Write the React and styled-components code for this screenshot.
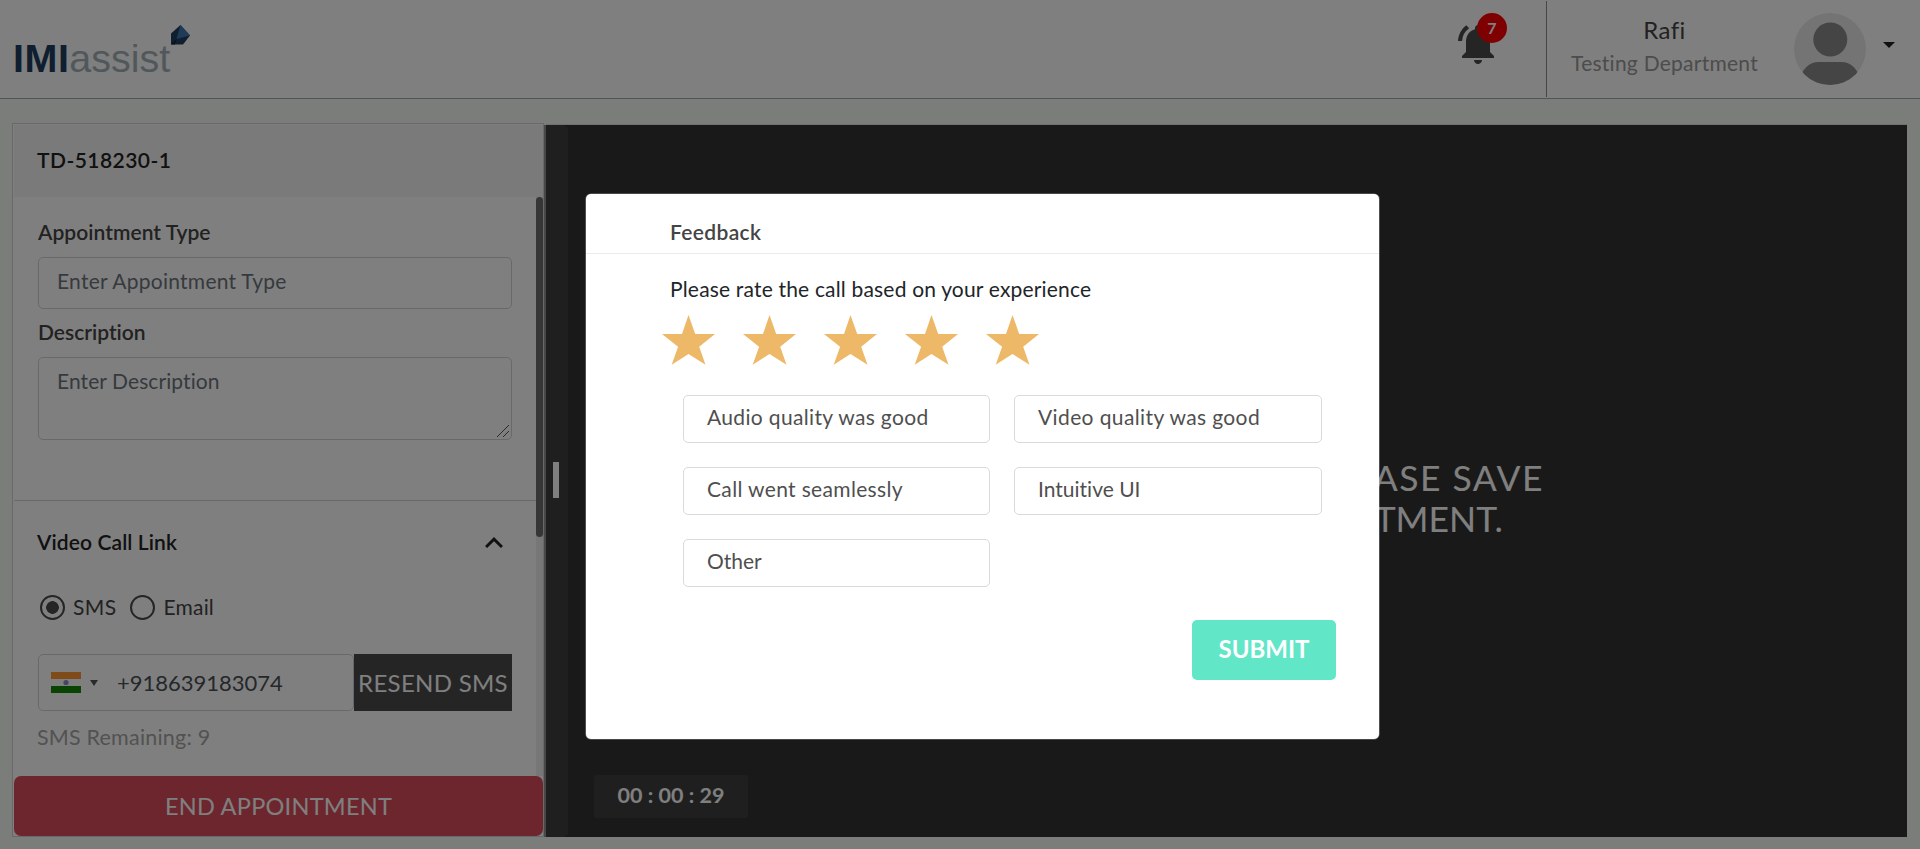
import React from 'react';
import styled, { createGlobalStyle } from 'styled-components';
import { MdNotificationsActive, MdKeyboardArrowUp } from 'react-icons/md';

const GlobalStyle = createGlobalStyle`
  *, *::before, *::after { box-sizing: border-box; }
  body { margin: 0; background: #f6faf7; overflow: hidden; }
  body, input, textarea, button { font-family: Lato, "Open Sans", sans-serif; }
`;

const Page = styled.div`
  position: relative;
  height: 849px;
  display: flex;
  flex-direction: column;
  background: #f6faf7;
  font-size: 21px;
  line-height: 24px;
  color: #444;
  overflow: hidden;
`;

const Text = styled.span`
  display: block;
  white-space: nowrap;
  font-size: ${(p) => p.$size || 21}px;
  font-weight: ${(p) => p.$weight || 400};
  letter-spacing: ${(p) => p.$spacing || 0}px;
  font-variant-ligatures: none;
  color: ${(p) => p.$color || 'inherit'};
`;

/* Top bar */
const TopBar = styled.header`
  flex: none;
  height: 99px;
  display: flex;
  align-items: flex-start;
  border-bottom: 1px solid #9ea8b6;
  background: #fff;
`;
const Logo = styled.div`
  display: flex;
  align-items: flex-start;
  margin-left: 13px;
  padding-top: 25px;
  font: 39.5px/44px "Liberation Sans", Arial, sans-serif;
`;
const LogoBold = styled.b`
  margin-top: 11px;
  color: #203f60;
  letter-spacing: 0.5px;
`;
const LogoLight = styled.span`
  margin-top: 11px;
  color: #a3b1b8;
`;
const LogoMark = styled.svg`
  display: block;
  width: 19px;
  height: 20px;
  margin-left: 1px;
`;
const Alerts = styled.div`
  position: relative;
  width: 48px;
  height: 48px;
  margin: 20px 44px 0 auto;
  color: #4a4a4a;
  svg { display: block; }
`;
const Badge = styled.span`
  position: absolute;
  left: 23px;
  top: -7px;
  width: 30px;
  height: 30px;
  border-radius: 50%;
  background: #f00;
  color: #fff;
  font-size: 16px;
  font-weight: 700;
  line-height: 29px;
  text-align: center;
`;
const Divider = styled.div`
  width: 1px;
  height: 96px;
  margin-top: 1px;
  background: #8c8c8c;
`;
const UserInfo = styled.div`
  width: 187px;
  margin: 13px 36px 0 24px;
  display: flex;
  flex-direction: column;
  align-items: center;
  line-height: 33px;
`;
const Avatar = styled.svg`
  display: block;
  width: 72px;
  height: 72px;
  margin-top: 13px;
`;
const Caret = styled.span`
  width: 0;
  height: 0;
  margin: 42px 25px 0 17px;
  border: 6.5px solid transparent;
  border-top-color: #222;
  border-bottom: 0;
`;

/* Workspace */
const Workspace = styled.main`
  flex: none;
  display: flex;
  height: 714px;
  margin: 24px 13px 0 12px;
`;
const SidePanel = styled.section`
  width: 532px;
  display: flex;
  flex-direction: column;
  border: 1px solid #d2d2d2;
  padding: 1px 0 0 1px;
  background: #fff;
`;
const PanelHeader = styled.div`
  height: 72px;
  padding: 0 0 2px 23px;
  display: flex;
  align-items: center;
  color: #222;
  background: #f4f4f4;
`;
const PanelBody = styled.div`
  flex: 1;
  display: flex;
  min-height: 0;
`;
const Sections = styled.div`
  width: 522px;
  display: flex;
  flex-direction: column;
`;
const FormSection = styled.div`
  height: 304px;
  padding: 23px 24px 0;
  display: flex;
  flex-direction: column;
  border-bottom: 1px solid #d2d2d2;
`;
const Field = styled.label`
  display: flex;
  flex-direction: column;
  gap: 13px;
  & + & { margin-top: 11px; }
`;
const Input = styled.input`
  height: 52px;
  padding: 0 18px 5px;
  border: 1px solid #d2d2d2;
  border-radius: 5px;
  outline: 0;
  font-size: 21px;
  letter-spacing: 0.25px;
  background: #fff;
  &::placeholder { color: #6c757d; opacity: 1; }
`;
const AreaWrap = styled.div`
  position: relative;
  height: 83px;
`;
const Area = styled.textarea`
  display: block;
  width: 100%;
  height: 83px;
  padding: 11px 18px;
  border: 1px solid #d2d2d2;
  border-radius: 5px;
  outline: 0;
  resize: none;
  font-size: 21px;
  line-height: 24px;
  letter-spacing: 0.09px;
  background: #fff;
  &::placeholder { color: #6c757d; opacity: 1; }
`;
const Grip = styled.svg`
  position: absolute;
  right: 3px;
  bottom: 3px;
  width: 12px;
  height: 12px;
`;
const SectionTitle = styled.div`
  height: 82px;
  padding: 0 27px 0 23px;
  display: flex;
  align-items: center;
  justify-content: space-between;
  color: #222;
`;
const Chevron = styled(MdKeyboardArrowUp)`
  width: 36px;
  height: 36px;
  margin: 2px -3px 0 0;
`;
const Radios = styled.div`
  display: flex;
  align-items: center;
  height: 26px;
  margin: 11px 0 0 26px;
`;
const Radio = styled.label`
  display: flex;
  align-items: center;
  & + & { margin-left: 14px; }
`;
const RadioDot = styled.span`
  width: 25px;
  height: 25px;
  margin-right: 8px;
  border: 2.5px solid #4a4a4a;
  border-radius: 50%;
  background: ${(p) => (p.$checked ? 'radial-gradient(circle, #4a4a4a 6px, transparent 6.6px)' : 'none')};
`;
const PhoneRow = styled.div`
  display: flex;
  height: 57px;
  margin: 34px 24px 14px;
`;
const PhoneBox = styled.div`
  width: 316px;
  padding-left: 12px;
  display: flex;
  align-items: center;
  border: 1px solid #ced4da;
  border-radius: 5px;
  color: #495057;
`;
const Flag = styled.svg`
  display: block;
  width: 30px;
  height: 21px;
`;
const SmallCaret = styled.span`
  margin: 1px 19px 0 9px;
  border: 4.5px solid transparent;
  border-top: 6px solid #555;
  border-bottom: 0;
`;
const ResendButton = styled.button`
  flex: 1;
  padding: 0;
  display: flex;
  align-items: center;
  justify-content: center;
  border: 0;
  color: #fff;
  background: #4a4a4a;
`;
const Remaining = styled.div`
  padding-left: 23px;
  color: #a5a5a5;
`;
const ScrollTrack = styled.div`
  width: 7px;
  background: #efefef;
`;
const ScrollThumb = styled.div`
  height: 340px;
  border-radius: 4px;
  background: #6c6c6c;
`;
const EndButton = styled.button`
  height: 60px;
  display: flex;
  align-items: center;
  justify-content: center;
  border: 0;
  border-radius: 7px;
  color: #fff;
  background: #da4c5c;
`;

const Splitter = styled.div`
  width: 2px;
  margin-top: 2px;
  background: #909090;
`;
const VideoPanel = styled.section`
  flex: 1;
  margin-top: 2px;
  display: flex;
  background: #333;
  box-shadow: 0 -1px 0 #e0e0e0;
  overflow: hidden;
`;
const Handle = styled.div`
  width: 22px;
  padding: 337px 0 0 7px;
  border-radius: 0 5px 5px 0;
  background: #3f3f3f;
`;
const HandleBar = styled.div`
  width: 6px;
  height: 36px;
  background: #fff;
`;
const VideoArea = styled.div`
  flex: 1;
  display: flex;
  flex-direction: column;
  justify-content: space-between;
  padding: 332px 0 19px 26px;
  color: #fff;
`;
const Message = styled.div`
  width: 950px;
  display: flex;
  flex-direction: column;
  align-items: flex-end;
  line-height: 41px;
`;
const Timer = styled.div`
  width: 154px;
  height: 43px;
  padding-bottom: 3px;
  display: flex;
  align-items: center;
  justify-content: center;
  border-radius: 3px;
  background: #3f3f3f;
`;

/* Dialog */
const Backdrop = styled.div`
  position: absolute;
  inset: 0;
  padding: 194px 0 0 586px;
  background: rgba(0, 0, 0, 0.5);
`;
const Dialog = styled.div`
  width: 793px;
  height: 545px;
  display: flex;
  flex-direction: column;
  border-radius: 5px;
  background: #fff;
  box-shadow: 0 0 0 0.6px rgba(255, 255, 255, 0.4);
`;
const DialogHeader = styled.div`
  height: 60px;
  padding: 26px 0 0 84px;
  border-bottom: 1px solid #e9ecef;
`;
const DialogBody = styled.div`
  padding: 23px 43px 0 84px;
  display: flex;
  flex-direction: column;
`;
const Stars = styled.div`
  display: flex;
  gap: 28px;
  margin: 14px 0 0 -8px;
`;
const StarIcon = styled.svg`
  display: block;
  width: 53px;
  height: 50px;
  fill: #edb867;
`;
const Options = styled.div`
  display: grid;
  grid-template-columns: 307px 308px;
  grid-auto-rows: 48px;
  gap: 24px;
  margin: 30px 0 33px 13px;
`;
const Option = styled.button`
  display: flex;
  align-items: center;
  padding: 0 23px 5px;
  border: 1px solid #dadada;
  border-radius: 5px;
  color: #4f4f4f;
  background: #fff;
`;
const SubmitButton = styled.button`
  align-self: flex-end;
  width: 144px;
  height: 60px;
  padding: 0 0 3px;
  display: flex;
  align-items: center;
  justify-content: center;
  border: 0;
  border-radius: 5px;
  color: #fff;
  background: #62e6c8;
`;

const OPTIONS = [
  ['Audio quality was good', 0.34],
  ['Video quality was good', 0.38],
  ['Call went seamlessly', 0.34],
  ['Intuitive UI', 0],
  ['Other', 0],
];

function Header() {
  return (
    <TopBar>
      <Logo>
        <LogoBold>IMI</LogoBold>
        <LogoLight>assist</LogoLight>
        <LogoMark viewBox="0 0 19 20">
          <path d="M9.5 0 19 10.5 12 19.5H0V8.500z" fill="#203f60" />
          <path d="M9.500 0 19 10.500 5.500 14z" fill="#3c78b0" />
          <path d="M0 19.500 5.500 14 4 19.500z" fill="#12263a" />
        </LogoMark>
      </Logo>
      <Alerts>
        <MdNotificationsActive size={48} />
        <Badge>7</Badge>
      </Alerts>
      <Divider />
      <UserInfo>
        <Text $size={24} $spacing={0.4}>Rafi</Text>
        <Text $spacing={0.25} $color="#999">Testing Department</Text>
      </UserInfo>
      <Avatar viewBox="0 0 72 72">
        <defs>
          <clipPath id="avatar"><circle cx="36" cy="36" r="36" /></clipPath>
        </defs>
        <g clipPath="url(#avatar)">
          <rect width="72" height="72" fill="#e8e8e8" />
          <circle cx="36.300" cy="26.500" r="17" fill="#8a8a8a" />
          <path d="M4 72C7 56 15 49 25 49h22c10 0 18 7 21 23z" fill="#8a8a8a" />
        </g>
      </Avatar>
      <Caret />
    </TopBar>
  );
}

function AppointmentPanel() {
  return (
    <SidePanel>
      <PanelHeader><Text $weight={600} $spacing={0.45}>TD-518230-1</Text></PanelHeader>
      <PanelBody>
        <Sections>
          <FormSection>
            <Field>
              <Text $weight={600} $spacing={0.05}>Appointment Type</Text>
              <Input placeholder="Enter Appointment Type" />
            </Field>
            <Field>
              <Text $weight={600}>Description</Text>
              <AreaWrap>
                <Area placeholder="Enter Description" />
                <Grip viewBox="0 0 12 12">
                  <path d="M0 12 12 0M6 12 12 6" stroke="#555" strokeWidth="1" />
                </Grip>
              </AreaWrap>
            </Field>
          </FormSection>
          <SectionTitle>
            <Text $weight={600} $spacing={0.1}>Video Call Link</Text>
            <Chevron />
          </SectionTitle>
          <Radios>
            <Radio><RadioDot $checked /><Text $spacing={0.4}>SMS</Text></Radio>
            <Radio><RadioDot /><Text $spacing={0.2}>Email</Text></Radio>
          </Radios>
          <PhoneRow>
            <PhoneBox>
              <Flag viewBox="0 0 30 21">
                <rect width="30" height="7" fill="#ff9933" />
                <rect y="7" width="30" height="7" fill="#fff" />
                <rect y="14" width="30" height="7" fill="#128807" />
                <circle cx="15" cy="10.500" r="2.600" fill="#8a8ac8" />
              </Flag>
              <SmallCaret />
              <Text $size={22}>+918639183074</Text>
            </PhoneBox>
            <ResendButton><Text $size={24} $spacing={0.3}>RESEND SMS</Text></ResendButton>
          </PhoneRow>
          <Remaining><Text $size={21.5} $spacing={0.2}>SMS Remaining: 9</Text></Remaining>
        </Sections>
        <ScrollTrack><ScrollThumb /></ScrollTrack>
      </PanelBody>
      <EndButton><Text $size={23.5} $spacing={0.27}>END APPOINTMENT</Text></EndButton>
    </SidePanel>
  );
}

const MessageSecond = styled(Text)`
  margin-right: 41px;
`;

function VideoCall() {
  return (
    <VideoPanel>
      <Handle><HandleBar /></Handle>
      <VideoArea>
        <Message>
          <Text $size={35.5} $spacing={1.5}>PLEASE SAVE</Text>
          <MessageSecond $size={35.5}>APPOINTMENT.</MessageSecond>
        </Message>
        <Timer><Text $size={21.5} $weight={700}>00 : 00 : 29</Text></Timer>
      </VideoArea>
    </VideoPanel>
  );
}

function FeedbackDialog() {
  return (
    <Backdrop>
      <Dialog>
        <DialogHeader><Text $weight={600} $spacing={0.35}>Feedback</Text></DialogHeader>
        <DialogBody>
          <Text $spacing={0.18} $color="#212529">Please rate the call based on your experience</Text>
          <Stars>
            {[1, 2, 3, 4, 5].map((n) => (
              <StarIcon key={n} viewBox="0 0 53 50">
                <path d="M26.500 0 33.200 19H53L37.200 31.700 43.500 49.700 26.500 39 9.700 49.700 16.100 31.700 0 19H20z" />
              </StarIcon>
            ))}
          </Stars>
          <Options>
            {OPTIONS.map(([label, spacing]) => (
              <Option key={label}><Text $spacing={spacing}>{label}</Text></Option>
            ))}
          </Options>
          <SubmitButton><Text $size={24} $weight={700}>SUBMIT</Text></SubmitButton>
        </DialogBody>
      </Dialog>
    </Backdrop>
  );
}

export default function App() {
  return (
    <Page>
      <GlobalStyle />
      <Header />
      <Workspace>
        <AppointmentPanel />
        <Splitter />
        <VideoCall />
      </Workspace>
      <FeedbackDialog />
    </Page>
  );
}
